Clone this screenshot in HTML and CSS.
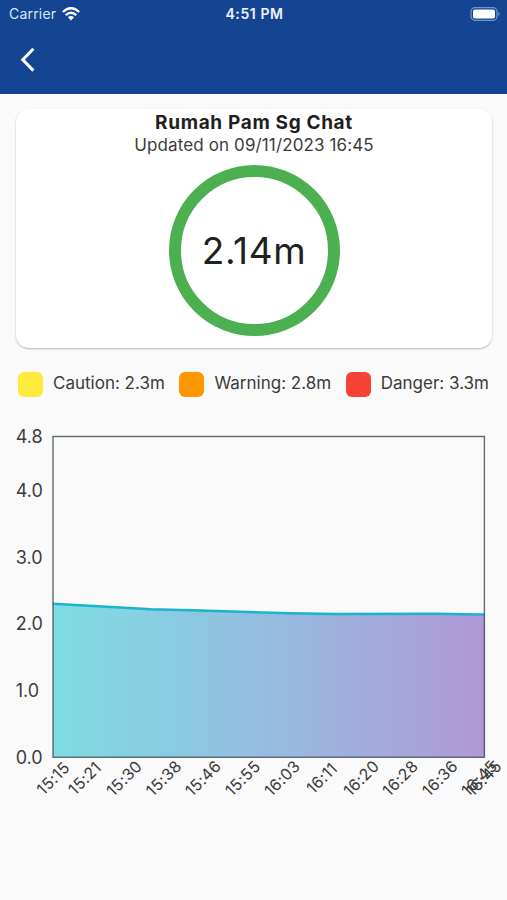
FILE: index.html
```
<!DOCTYPE html>
<html lang="ms">
  <head>
    <meta charset="utf-8" />
    <meta name="viewport" content="width=device-width, initial-scale=1" />
    <title>Rumah Pam Sg Chat</title>
    <link rel="stylesheet" href="styles.css" />
  </head>
  <body>
    <header>
      <div class="status">
        <div class="carrier">
          <span>Carrier</span>
          <svg class="wifi" width="18" height="14" viewBox="0 0 18 14">
            <path d="M.8 5Q9-2.6 17.2 5M3.7 8.2Q9 3.4 14.3 8.2" />
            <path class="dot" d="M5.9 10.3Q9 7.8 12.1 10.3L9 13.4Z" />
          </svg>
        </div>
        <span class="time">4:51 PM</span>
        <svg class="battery" width="31" height="14" viewBox="0 0 31 14">
          <rect class="shell" x="1" y=".7" width="26" height="12.6" rx="4" />
          <rect class="level" x="3" y="2.6" width="22" height="8.8" rx="2" />
          <path class="tip" d="M28.4 4.8Q31 7 28.4 9.2Z" />
        </svg>
      </div>
      <a class="back" href="#" aria-label="Back">
        <svg width="16" height="26" viewBox="0 0 16 26">
          <path d="M13.4 1.8L2.8 12.7L13.4 23.6" />
        </svg>
      </a>
    </header>

    <main>
      <section class="card">
        <h1>Rumah Pam Sg Chat</h1>
        <p class="updated">Updated on 09/11/2023 16:45</p>
        <div class="gauge"><span>2.14m</span></div>
      </section>

      <ul class="legend">
        <li><i class="caution"></i><span>Caution: 2.3m</span></li>
        <li><i class="warning"></i><span>Warning: 2.8m</span></li>
        <li><i class="danger"></i><span>Danger: 3.3m</span></li>
      </ul>

      <svg class="chart" width="507" height="390" viewBox="0 0 507 390">
        <defs>
          <linearGradient id="fill" x1="0" x2="1" y1="0" y2="0">
            <stop offset="0" stop-color="#7edde3" />
            <stop offset=".5" stop-color="#95bce0" />
            <stop offset="1" stop-color="#b198d7" />
          </linearGradient>
        </defs>
        <path
          class="area"
          d="M53 183.8L102 186.6L151 189.3L200 190.6L290 193.2L335 193.9L435 193.8L484.5 194.5V337H53Z"
        />
        <path
          class="line"
          d="M53 183.8L102 186.6L151 189.3L200 190.6L290 193.2L335 193.9L435 193.8L484.5 194.5"
        />
        <rect class="frame" x="53" y="16.5" width="431.4" height="320.8" />
        <g class="y-axis">
          <text x="15.7" y="23.3">4.8</text>
          <text x="15.7" y="76.8">4.0</text>
          <text x="15.7" y="143.6">3.0</text>
          <text x="15.7" y="210.3">2.0</text>
          <text x="15.7" y="276.8">1.0</text>
          <text x="15.7" y="343.6">0.0</text>
        </g>
        <g class="x-axis">
          <text transform="translate(53 358) rotate(-45)" dy="6">15:15</text>
          <text transform="translate(84.5 358) rotate(-45)" dy="6">15:21</text>
          <text transform="translate(124 358) rotate(-45)" dy="6">15:30</text>
          <text transform="translate(163.5 358) rotate(-45)" dy="6">15:38</text>
          <text transform="translate(202.8 358) rotate(-45)" dy="6">15:46</text>
          <text transform="translate(242.5 358) rotate(-45)" dy="6">15:55</text>
          <text transform="translate(282 358) rotate(-45)" dy="6">16:03</text>
          <text transform="translate(321.5 358) rotate(-45)" dy="6">16:11</text>
          <text transform="translate(361 358) rotate(-45)" dy="6">16:20</text>
          <text transform="translate(400 358) rotate(-45)" dy="6">16:28</text>
          <text transform="translate(439.8 358) rotate(-45)" dy="6">16:36</text>
          <text transform="translate(479 358) rotate(-45)" dy="6">16:45</text>
          <text transform="translate(483.5 358) rotate(-45)" dy="6">16:45</text>
        </g>
      </svg>
    </main>
  </body>
</html>
```
FILE: styles.css
```
* {
  box-sizing: border-box;
  margin: 0;
  padding: 0;
}

body {
  min-height: 100vh;
  background: #fafafa;
  color: #3c3c3c;
  font-family: Inter, Roboto, sans-serif;
  font-size: 17px;
}

header {
  height: 94px;
  background: #154592;
}

.status {
  display: grid;
  grid-template-columns: 1fr auto 1fr;
  align-items: center;
  height: 27px;
  padding: 0 6px 0 9px;
  color: #d9e6fa;
  font-size: 14px;
}

.carrier {
  display: flex;
  align-items: center;
  gap: 6px;
  letter-spacing: 0.2px;
}

.wifi {
  fill: none;
  stroke: #fff;
  stroke-width: 2.3;
}

.wifi .dot {
  fill: #fff;
  stroke: none;
}

.time {
  margin-right: 1px;
  color: #edf3fd;
  font-weight: 600;
  letter-spacing: 0.6px;
}

.battery {
  justify-self: end;
}

.shell {
  fill: none;
  stroke: #7396c8;
  stroke-width: 1.3;
}

.level {
  fill: #fff;
}

.tip {
  fill: #7396c8;
}

.back {
  display: block;
  width: 16px;
  margin: 20px 0 0 20px;
}

.back svg {
  display: block;
  fill: none;
  stroke: #fff;
  stroke-width: 3;
}

.card {
  display: flex;
  flex-direction: column;
  align-items: center;
  height: 239px;
  margin: 15px 15px 0 16px;
  background: #fff;
  border-radius: 13px;
  box-shadow: 0 1px 2px rgba(0, 0, 0, 0.27);
}

h1 {
  margin-top: 1px;
  color: #1f1f1f;
  font-size: 19px;
  font-weight: 650;
  line-height: 26px;
  letter-spacing: 0.65px;
}

.updated {
  line-height: 19px;
  letter-spacing: 0.12px;
}

.gauge {
  display: flex;
  align-items: center;
  justify-content: center;
  width: 171px;
  height: 171px;
  margin-top: 10px;
  border: 12px solid #4caf50;
  border-radius: 50%;
  color: #202020;
  font-size: 37px;
  font-weight: 380;
  letter-spacing: 0.6px;
}

.legend {
  display: flex;
  justify-content: space-between;
  margin: 24px 18px 0;
  list-style: none;
}

.legend li {
  display: flex;
  gap: 10px;
  line-height: 22px;
}

.legend i {
  width: 25px;
  height: 25px;
  border-radius: 6px;
}

.caution {
  background: #ffeb3b;
}

.warning {
  background: #ff9800;
}

.danger {
  background: #f44336;
}

.chart {
  display: block;
  margin-top: 23px;
}

.area {
  fill: url(#fill);
}

.line {
  fill: none;
  stroke: #19b5cc;
  stroke-width: 2.5;
}

.frame {
  fill: none;
  stroke: #37474f;
  stroke-opacity: 0.8;
  stroke-width: 1.4;
}

.chart text {
  fill: #3c3c3c;
}

.y-axis {
  font-size: 18px;
}

.x-axis {
  font-size: 16px;
  letter-spacing: 0.3px;
  text-anchor: middle;
}
```
